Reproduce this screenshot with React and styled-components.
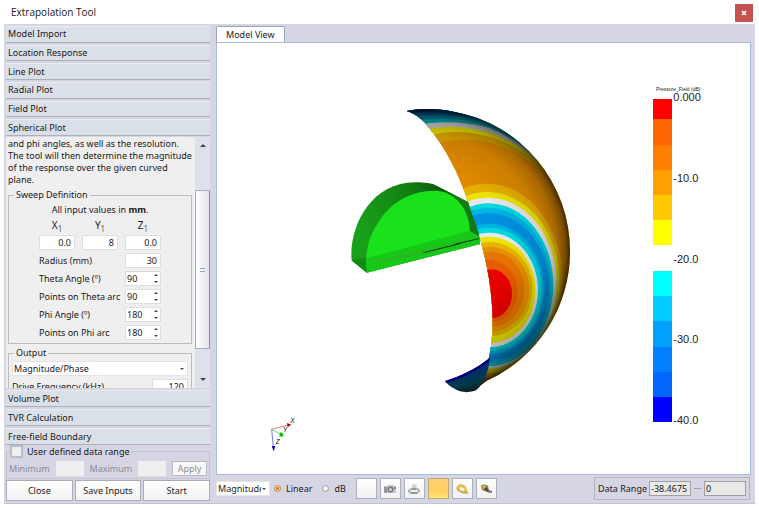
import React, { useState } from 'react'
import styled, { createGlobalStyle } from 'styled-components'

const GlobalStyle = createGlobalStyle`
  *,
  *::before,
  *::after {
    box-sizing: border-box;
  }
  body {
    margin: 0;
    background: #fff;
    color: #1a1a1a;
    font-family: 'Noto Sans', 'Open Sans', sans-serif;
    font-size: 9px;
    line-height: 12px;
  }
  button,
  input,
  select {
    font: inherit;
    color: inherit;
    margin: 0;
  }
`

const topSections = ['Model Import', 'Location Response', 'Line Plot', 'Radial Plot', 'Field Plot', 'Spherical Plot']
const bottomSections = ['Volume Plot', 'TVR Calculation', 'Free-field Boundary']

const angles = [
  { id: 'theta', label: 'Theta Angle (º)', value: '90' },
  { id: 'theta-points', label: 'Points on Theta arc', value: '90' },
  { id: 'phi', label: 'Phi Angle (º)', value: '180' },
  { id: 'phi-points', label: 'Points on Phi arc', value: '180' },
]

// outermost ring first: [fill, cx, cy, rx, ry]
const rings = [
  ['#e6b000', 440, 558, 228, 292],
  ['#ece400', 442, 563, 217, 272],
  ['#e8e8e8', 444, 565, 206, 257],
  ['#00d8e0', 445, 569, 195, 244],
  ['#00b4e4', 445, 572, 189, 233],
  ['#0090e0', 446, 576, 181, 221],
  ['#00b0e0', 447, 582, 165, 196],
  ['#00d8e0', 447, 583, 158, 185],
  ['#e8e8e8', 448, 585, 146, 172],
  ['#ece400', 448, 585, 138, 160],
  ['#e6b400', 449, 582, 129, 141],
  ['#e69000', 450, 583, 118, 128],
  ['#e67400', 452, 583, 101, 113],
  ['#e65c00', 452, 589, 81, 94],
  ['#e80000', 456, 596, 60, 73],
]

// bands of the upper cap, lowest first
const caps = [
  ['#dca400', 'M300 142 C350 130 430 130 500 160 C570 192 630 240 700 340 V0 H180 V142 Z'],
  ['#e8e000', 'M285 117 C340 105 420 110 490 140 C560 172 610 212 660 272 V0 H180 V117 Z'],
  ['#cccccc', 'M268 102 C310 92 390 94 450 114 C520 140 570 172 610 217 V0 H180 V102 Z'],
  ['#00b0b8', 'M255 86 C310 78 390 80 450 100 C510 124 560 156 600 200 V0 H180 V86 Z'],
  ['#0088a8', 'M240 74 C300 68 380 70 440 90 C500 112 545 141 580 176 V0 H180 V74 Z'],
  ['#006498', 'M230 64 C290 58 370 60 430 76 C480 92 510 110 540 134 V0 H180 V64 Z'],
  ['#003c80', 'M215 54 C270 50 340 52 400 66 V0 H180 V54 Z'],
]

const scaleBlocks = [
  ['#ff0000', 12, 60],
  ['#ff6600', 72, 78],
  ['#ff8000', 150, 75],
  ['#ffa000', 225, 75],
  ['#ffc800', 300, 75],
  ['#ffff00', 375, 75],
  ['#00ffff', 528, 75],
  ['#00ccff', 603, 75],
  ['#00a0ff', 678, 78],
  ['#0080ff', 756, 75],
  ['#0066ff', 831, 75],
  ['#0000ff', 906, 75],
]

const scaleLabels = [
  ['0.000', 19],
  ['-10.0', 261],
  ['-20.0', 503],
  ['-30.0', 745],
  ['-40.0', 988],
]

const shell =
  'M200 48 C225 43 245 42 265 42 C290 42 316 45 340 50 A424 424 0 0 1 690 470 A424 424 0 0 1 440 857 C420 874 396 888 375 893 C410 875 430 850 440 815 C456 760 461 700 456 630 C450 540 430 460 410 400 C375 280 330 170 255 85 C240 68 220 54 200 48 Z'

const Plot = () => (
  <PlotSvg viewBox='-369 -156 1599 1293' role='img' aria-label='Pressure field over a spherical surface'>
    <defs>
      <clipPath id='shell'>
        <path d={shell} />
      </clipPath>
      <radialGradient id='shade' gradientUnits='userSpaceOnUse' cx='266' cy='467' r='426'>
        <stop offset='0.55' stopOpacity='0' />
        <stop offset='0.8' stopOpacity='0.1' />
        <stop offset='0.9' stopOpacity='0.24' />
        <stop offset='0.96' stopOpacity='0.45' />
        <stop offset='1' stopOpacity='0.74' />
      </radialGradient>
      <linearGradient id='lower' gradientUnits='userSpaceOnUse' x1='470' y1='560' x2='580' y2='820'>
        <stop offset='0' stopOpacity='0' />
        <stop offset='1' stopOpacity='0.16' />
      </linearGradient>
      <linearGradient id='fin' gradientUnits='userSpaceOnUse' x1='380' y1='820' x2='400' y2='893'>
        <stop offset='0' stopColor='#002c74' />
        <stop offset='0.6' stopColor='#003a4c' />
        <stop offset='1' stopColor='#0c1810' />
      </linearGradient>
      <linearGradient id='rim' gradientUnits='userSpaceOnUse' x1='60' y1='400' x2='330' y2='280'>
        <stop offset='0' stopColor='#18a018' />
        <stop offset='0.6' stopColor='#148014' />
        <stop offset='1' stopColor='#0a500c' />
      </linearGradient>
    </defs>

    <g clipPath='url(#shell)'>
      <rect x='180' y='30' width='530' height='880' fill='#e08a00' />
      {caps.map(([fill, d]) => (
        <path key={d} d={d} fill={fill} />
      ))}
      {rings.map(([fill, cx, cy, rx, ry]) => (
        <ellipse key={ry} fill={fill} cx={cx} cy={cy} rx={rx} ry={ry} />
      ))}
      <rect x='180' y='30' width='530' height='880' fill='url(#shade)' />
      <rect x='180' y='500' width='530' height='410' fill='url(#lower)' />
    </g>
    <path d='M315 858 C365 842 410 820 450 788 C446 830 432 866 408 886 C390 893 360 893 345 882 C332 876 322 867 315 858 Z' fill='url(#fin)' />
    <path d='M315 858 C365 842 410 820 450 788 L448 798 C410 828 368 850 321 864 Z' fill='#00007c' />

    <path d='M35 497 C25 400 90 262 225 262 C255 262 275 265 290 272 L384 321 L418 430 L420 447 L80 533 Z' fill='url(#rim)' />
    <path d='M300 278 L384 321 L415 410 L418 430 L390 405 C388 350 355 305 320 290 Z' fill='#117a14' />
    <path d='M80 533 C74 480 84 430 110 390 C150 320 215 285 290 287 C350 292 388 345 390 407 L420 430 L420 447 Z' fill='#1ae21a' />
    <path d='M77 490 L390 407 L420 427 L420 447 L80 533 Z' fill='#18c818' />
    <path d='M108 498 C180 478 300 450 386 432 L386 440 C300 465 180 496 112 504 Z' fill='#24bc1a' />
    <path d='M35 495 L77 488 L80 533 Z' fill='#128a14' />
    <path d='M250 473 L360 446 M344 448 L416 431' stroke='#0a3c0a' strokeWidth='3' />

    <g fill='#222'>
      <text x='948' y='-13' fontSize='15'>
        Pressure_Field (dB)
      </text>
      {scaleLabels.map(([label, y]) => (
        <text key={label} x='1000' y={y} fontSize='33'>
          {label}
        </text>
      ))}
    </g>
    {scaleBlocks.map(([fill, y, height]) => (
      <rect key={fill} x='939' y={y} width='57' height={height} fill={fill} />
    ))}

    <g transform='translate(-255 945)' strokeWidth='2'>
      <path d='M50 58 L100 45' stroke='#f03030' />
      <path d='M50 58 L76 72' stroke='#20c020' />
      <path d='M50 58 L55 112' stroke='#3030f0' />
      <path d='M96 39 L109 44 L98 51 Z' fill='#a00010' />
      <path d='M75 67 L85 71 L84 80 L73 79 Z' fill='#08b808' />
      <path d='M50 108 L61 108 L56 124 Z' fill='#0000a8' />
      <text x='106' y='38' fontSize='19' fontStyle='italic'>X</text>
      <text x='84' y='66' fontSize='19' fontStyle='italic'>Y</text>
      <text x='62' y='103' fontSize='19' fontStyle='italic'>Z</text>
    </g>
  </PlotSvg>
)

const Arrow = ({ up, width = 4 }) => (
  <svg width={width} height={width / 2} viewBox='0 0 6 3' aria-hidden='true'>
    <path d={up ? 'M0 3 L3 0 L6 3 Z' : 'M0 0 L3 3 L6 0 Z'} fill='#444' />
  </svg>
)

const Dropdown = ({ label, value, ...rest }) => (
  <SelectBox {...rest}>
    <select aria-label={label} defaultValue={value}>
      <option>{value}</option>
    </select>
    <Arrow />
  </SelectBox>
)

const CameraIcon = () => (
  <svg width='14' height='12' viewBox='0 0 14 12' aria-hidden='true'>
    <path d='M1 3 H4 L5 2 H10 L11 3 H13 V10 H1 Z' fill='#c4c6ca' />
    <path d='M1 4 H4 V10 H1 Z' fill='#94989c' />
    <circle cx='7.5' cy='6.5' r='3' fill='#74787c' />
    <circle cx='7.5' cy='6.5' r='1.5' fill='#d0d8e0' />
    <path d='M11 4 H13 V6 H11 Z' fill='#80848a' />
  </svg>
)

const PrinterIcon = () => (
  <svg width='14' height='12' viewBox='0 0 14 12' aria-hidden='true'>
    <path d='M5 1 L10 2 L9 6 L5 6 Z' fill='#d0d0d0' />
    <path d='M1 7 L4 5 H11 L13 7 V9 L10 11 H3 L1 9 Z' fill='#b0b4b8' />
    <path d='M3 7 H11 L10 9 H4 Z' fill='#eee' />
    <path d='M4 10 H10 M5 6 H9' stroke='#787878' />
  </svg>
)

const TapeIcon = ({ dark }) => (
  <svg width='14' height='12' viewBox='0 0 14 12' aria-hidden='true'>
    {dark ? (
      <>
        <path d='M2 3 C3 1 7 1 9 3 L10 7 L13 8 V10 L8 9 L3 7 Z' fill='#8c7c60' />
        <circle cx='5' cy='4' r='2' fill='#e0b040' />
        <path d='M6 5 L9 8' stroke='#444' strokeWidth='2' />
        <path d='M9 9 H13' stroke='#776' />
      </>
    ) : (
      <>
        <path d='M1 6 C2 0 8 0 11 4 L13 10 L8 10 Z' fill='#e4b840' />
        <path d='M2 7 L8 10 H13' fill='none' stroke='#b09c64' />
        <ellipse cx='7' cy='6' rx='3' ry='1.6' fill='#f8f0d8' transform='rotate(25 7 6)' />
      </>
    )}
  </svg>
)

const SectionList = ({ items, height }) => (
  <Sections $height={height}>
    {items.map((name) => (
      <SectionButton key={name} type='button'>
        {name}
      </SectionButton>
    ))}
  </Sections>
)

const App = () => {
  const [scale, setScale] = useState('linear')
  const [customRange, setCustomRange] = useState(false)

  return (
    <Page>
      <GlobalStyle />
      <TitleBar>
        <h1>Extrapolation Tool</h1>
        <CloseButton type='button' aria-label='Close window'>
          <svg width='6' height='6' viewBox='0 0 6 6' aria-hidden='true'>
            <path d='M1 1 L5 5 M5 1 L1 5' stroke='#fff' strokeWidth='1.6' />
          </svg>
        </CloseButton>
      </TitleBar>

      <Workspace>
        <Sidebar>
          <SectionList items={topSections} height={110} />
          <ScrollPane>
            <ScrollContent>
              <Intro>
                and phi angles, as well as the resolution. The tool will then determine the magnitude of the response
                over the given curved plane.
              </Intro>
              <Group>
                <legend>Sweep Definition</legend>
                <Hint>
                  All input values in <b>mm</b>.
                </Hint>
                <Coordinates>
                  {[
                    ['X', '0.0'],
                    ['Y', '8'],
                    ['Z', '0.0'],
                  ].map(([axis, value]) => (
                    <label key={axis}>
                      <span>
                        {axis}
                        <sub>1</sub>
                      </span>
                      <NumberField defaultValue={value} />
                    </label>
                  ))}
                </Coordinates>
                <FieldRow>
                  <label htmlFor='radius'>Radius (mm)</label>
                  <NumberField id='radius' defaultValue='30' />
                </FieldRow>
                {angles.map(({ id, label, value }) => (
                  <FieldRow key={id}>
                    <label htmlFor={id}>{label}</label>
                    <Spinner>
                      <input id={id} defaultValue={value} />
                      <div>
                        <button type='button' aria-label={`Increase ${label}`}>
                          <Arrow up />
                        </button>
                        <button type='button' aria-label={`Decrease ${label}`}>
                          <Arrow />
                        </button>
                      </div>
                    </Spinner>
                  </FieldRow>
                ))}
              </Group>
              <Group>
                <legend>Output</legend>
                <OutputFields>
                  <Dropdown label='Output type' value='Magnitude/Phase' />
                  <FrequencyRow>
                    <label htmlFor='frequency'>Drive Frequency (kHz)</label>
                    <NumberField id='frequency' defaultValue='120' />
                  </FrequencyRow>
                </OutputFields>
              </Group>
            </ScrollContent>
            <ScrollTrack>
              <Arrow up width={6} />
              <ScrollThumb />
              <Arrow width={6} />
            </ScrollTrack>
          </ScrollPane>
          <SectionList items={bottomSections} height={55} />

          <RangeGroup>
            <legend>
              <label>
                <input type='checkbox' checked={customRange} onChange={(e) => setCustomRange(e.target.checked)} />
                User defined data range
              </label>
            </legend>
            <label htmlFor='minimum'>Minimum</label>
            <input id='minimum' disabled={!customRange} />
            <label htmlFor='maximum'>Maximum</label>
            <input id='maximum' disabled={!customRange} />
            <button type='button' disabled={!customRange}>
              Apply
            </button>
          </RangeGroup>
          <Actions>
            <ActionButton type='button'>Close</ActionButton>
            <ActionButton type='button'>Save Inputs</ActionButton>
            <ActionButton type='button'>Start</ActionButton>
          </Actions>
        </Sidebar>

        <Main>
          <Tab type='button'>Model View</Tab>
          <View>
            <Plot />
          </View>
          <Toolbar>
            <Dropdown $compact label='Quantity' value='Magnitude' />
            <Radio>
              <input type='radio' name='scale' checked={scale === 'linear'} onChange={() => setScale('linear')} />
              Linear
            </Radio>
            <Radio>
              <input type='radio' name='scale' checked={scale === 'db'} onChange={() => setScale('db')} />
              dB
            </Radio>
            <Tools>
              <ToolButton type='button' aria-label='Blank background' />
              <ToolButton type='button' aria-label='Take snapshot'>
                <CameraIcon />
              </ToolButton>
              <ToolButton type='button' aria-label='Print'>
                <PrinterIcon />
              </ToolButton>
              <ToolButton type='button' aria-label='Highlight' $active />
              <ToolButton type='button' aria-label='Measure'>
                <TapeIcon />
              </ToolButton>
              <ToolButton type='button' aria-label='Measure path'>
                <TapeIcon dark />
              </ToolButton>
            </Tools>
            <DataRange>
              <label htmlFor='range-min'>Data Range</label>
              <input id='range-min' readOnly value='-38.4675' />
              <i />
              <input aria-label='Data range maximum' readOnly value='0' />
            </DataRange>
          </Toolbar>
        </Main>
      </Workspace>
    </Page>
  )
}

const Page = styled.div`
  display: flex;
  flex-direction: column;
  height: 100vh;
  min-height: 480px;
  padding: 0 4px 4px;
`

const TitleBar = styled.header`
  display: flex;
  align-items: center;
  justify-content: space-between;
  flex: 0 0 24px;
  padding: 2px 2px 0 7px;
  h1 {
    margin: 0;
    padding-bottom: 2px;
    font: 400 10px/16px 'Open Sans', sans-serif;
  }
`

const CloseButton = styled.button`
  display: flex;
  align-items: center;
  justify-content: center;
  width: 18px;
  height: 18px;
  padding: 0;
  border: 0;
  background: #c75050;
`

const Workspace = styled.div`
  display: flex;
  flex: 1;
  min-height: 0;
  gap: 6px;
  padding: 2px 4px 1px 2px;
  background: #d6d5e4;
  border-bottom: 1px solid #c4c4cc;
`

const Sidebar = styled.aside`
  display: flex;
  flex-direction: column;
  flex: 0 0 204px;
  min-height: 0;
  padding-bottom: 1px;
`

const Sections = styled.nav`
  display: grid;
  grid-auto-rows: 1fr;
  row-gap: 2px;
  flex: none;
  height: ${({ $height }) => $height}px;
`

const SectionButton = styled.button`
  padding: 0 2px;
  text-align: left;
  background: #dae0e8;
  border: 0;
  border-top: 1px solid #eaeef2;
  border-bottom: 1px solid #aab0bc;
`

const ScrollPane = styled.section`
  display: flex;
  flex: 1;
  min-height: 0;
  margin: 1px 0 2px;
  overflow: hidden;
  background: #efefef;
`

const ScrollContent = styled.div`
  flex: 1;
  min-width: 0;
  padding: 1px 3px 0 2px;
`

const Intro = styled.p`
  margin: 0 0 3px;
`

const Group = styled.fieldset`
  min-width: 0;
  margin: 0 0 3px;
  padding: 0 3px;
  border: 1px solid #bcbcbc;
  legend {
    margin-left: 2px;
    padding: 0 2px;
  }
`

const Hint = styled.p`
  margin: 3px 0;
  text-align: center;
`

const fieldLook = `
  min-width: 0;
  background: #fff;
  border: 1px solid #dedede;
  border-radius: 0;
  outline: 0;
`

const NumberField = styled.input`
  ${fieldLook}
  width: 36px;
  height: 15px;
  padding: 0 3px;
  text-align: right;
`

const Coordinates = styled.div`
  display: flex;
  justify-content: space-between;
  padding: 0 27px;
  margin-bottom: 3px;
  label {
    display: flex;
    flex-direction: column;
    align-items: center;
    gap: 4px;
    font-size: 10px;
  }
  input {
    font-size: 9px;
  }
  sub {
    font-size: 8px;
    line-height: 1px;
    color: #666;
  }
`

const FieldRow = styled.div`
  display: flex;
  align-items: center;
  justify-content: space-between;
  height: 15px;
  margin-bottom: 3px;
  padding: 0 27px;
  white-space: nowrap;
`

const Spinner = styled.div`
  ${fieldLook}
  display: flex;
  flex: 0 0 36px;
  height: 15px;
  input {
    width: 28px;
    padding: 0 1px;
    border: 0;
    background: none;
  }
  div {
    display: flex;
    flex-direction: column;
    justify-content: space-between;
    padding: 2px 0;
  }
  button {
    display: flex;
    padding: 0;
    border: 0;
    background: none;
  }
`

const SelectBox = styled.div`
  display: flex;
  align-items: center;
  width: ${({ $compact }) => ($compact ? '54px' : '100%')};
  height: 15px;
  padding-right: 3px;
  background: #fff;
  border: 1px solid #e4e4e4;
  select {
    flex: 1;
    min-width: 0;
    padding: 0 1px;
    appearance: none;
    background: none;
    border: 0;
    text-overflow: clip;
    overflow: hidden;
  }
  svg {
    flex: none;
  }
`

const OutputFields = styled.div`
  padding: 2px 0 4px;
`

const FrequencyRow = styled.div`
  display: flex;
  align-items: center;
  justify-content: space-between;
  padding-top: 3px;
`

const ScrollTrack = styled.div`
  display: flex;
  flex-direction: column;
  align-items: center;
  flex: 0 0 15px;
  padding: 7px 0;
  background: #dde1e9;
`

const ScrollThumb = styled.div`
  display: flex;
  align-items: center;
  justify-content: center;
  width: 15px;
  height: 67%;
  margin: auto 0 29px;
  background: linear-gradient(90deg, #fff, #dfe4ea);
  border: 1px solid #a8b0bc;
  border-right-color: #8890a0;
  &::after {
    content: '';
    width: 5px;
    height: 4px;
    border: solid #a0a8b4;
    border-width: 1px 0;
  }
`

const RangeGroup = styled.fieldset`
  display: flex;
  align-items: center;
  gap: 6px;
  min-width: 0;
  margin: 0;
  padding: 3px 2px 2px;
  border: 1px solid #c4c4ce;
  color: #8c8c94;
  legend {
    margin-left: 1px;
    padding: 0;
    color: #1a1a1a;
  }
  legend label {
    display: flex;
    align-items: center;
    gap: 4px;
    padding-right: 2px;
  }
  input[type='checkbox'] {
    appearance: none;
    width: 13px;
    height: 13px;
    background: #eee;
    border: 2px solid #b8bcc4;
  }
  > input {
    flex: 1;
    width: 20px;
    height: 15px;
    border: 0;
    background: #efefef;
  }
  > button {
    width: 35px;
    height: 15px;
    padding: 0;
    background: #f8f8fa;
    border: 1px solid #b8b8c4;
    color: inherit;
  }
`

const Actions = styled.div`
  display: grid;
  grid-template-columns: repeat(3, 1fr);
  gap: 2px;
  margin-top: 1px;
`

const ActionButton = styled.button`
  height: 21px;
  padding: 0;
  background: linear-gradient(#fff, #f2f2f4);
  border: 1px solid #a8acb8;
`

const Main = styled.main`
  display: flex;
  flex-direction: column;
  flex: 1;
  min-width: 0;
`

const Tab = styled.button`
  align-self: flex-start;
  height: 16px;
  padding: 0 9px;
  background: #fff;
  border: 1px solid #98a4b8;
  border-bottom: 0;
  border-radius: 2px 2px 0 0;
`

const View = styled.div`
  flex: 1;
  min-height: 0;
  overflow: hidden;
  background: #fff;
  border: 1px solid #a4bce0;
`

const PlotSvg = styled.svg`
  display: block;
  width: 100%;
  height: 100%;
  font-family: 'Liberation Sans', sans-serif;
`

const Toolbar = styled.div`
  display: flex;
  align-items: center;
  gap: 4px;
  height: 27px;
  padding-right: 1px;
`

const Radio = styled.label`
  display: flex;
  align-items: center;
  gap: 5px;
  margin-right: 6px;
  input {
    appearance: none;
    width: 7px;
    height: 7px;
    border: 1px solid #9c9ca4;
    border-radius: 50%;
    background: #f0f0f0;
    &:checked {
      background: radial-gradient(circle, #e87800 35%, #ffe8c8 60%);
      border-color: #b08c60;
    }
  }
`

const Tools = styled.div`
  display: flex;
  gap: 3px;
`

const ToolButton = styled.button`
  display: flex;
  align-items: center;
  justify-content: center;
  width: 21px;
  height: 21px;
  padding: 0;
  background: ${({ $active }) => ($active ? 'linear-gradient(#ffd070, #ffd060 70%, #ffec70)' : 'linear-gradient(#fff, #f0f0f2)')};
  border: 1px solid ${({ $active }) => ($active ? '#c0a878' : '#acb0bc')};
`

const DataRange = styled.div`
  display: flex;
  align-items: center;
  gap: 2px;
  height: 23px;
  margin-left: auto;
  padding: 0 3px;
  border: 1px solid #b4b4c0;
  input {
    width: 42px;
    height: 15px;
    padding: 0 1px;
    background: #e8e8e6;
    border: 1px solid #a0a0a4;
  }
  i {
    width: 7px;
    height: 1px;
    margin: 0 1px;
    background: #a0a0a8;
  }
`

export default App
